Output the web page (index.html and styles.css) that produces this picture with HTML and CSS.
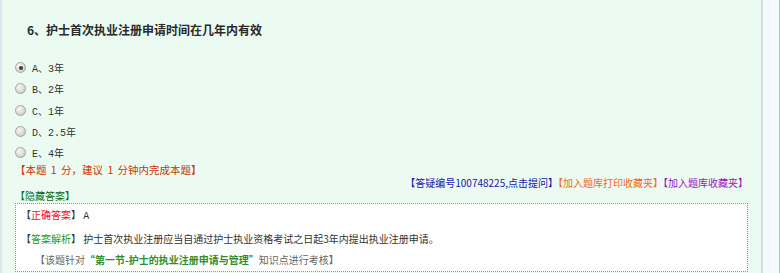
FILE: index.html
```html
<!DOCTYPE html>
<html lang="zh-CN">
<head>
<meta charset="utf-8">
<title>试题</title>
<link rel="stylesheet" href="styles.css">
</head>
<body>
<div class="page">
  <div class="main">
    <h2 class="q-title">6、护士首次执业注册申请时间在几年内有效</h2>
    <ul class="options">
      <li><span class="radio checked"></span><span class="opt">A、3年</span></li>
      <li><span class="radio"></span><span class="opt">B、2年</span></li>
      <li><span class="radio"></span><span class="opt">C、1年</span></li>
      <li><span class="radio"></span><span class="opt">D、2.5年</span></li>
      <li><span class="radio"></span><span class="opt">E、4年</span></li>
    </ul>
    <p class="score">【本题 1 分，建议 1 分钟内完成本题】</p>
    <div class="links"><a class="ask">【答疑编号100748225,点击提问】</a><a class="print">【加入题库打印收藏夹】</a><a class="fav">【加入题库收藏夹】</a></div>
    <p class="toggle">【隐藏答案】</p>
    <div class="answer">
      <p class="row">【<span class="red">正确答案</span>】 <span class="mono">A</span></p>
      <p class="row">【<span class="green">答案解析</span>】 护士首次执业注册应当自通过护士执业资格考试之日起3年内提出执业注册申请。</p>
      <p class="row point">【该题针对<b>“第一节-护士的执业注册申请与管理”</b>知识点进行考核】</p>
    </div>
    <div class="yellow"></div>
  </div>
  <div class="side"></div>
</div>
</body>
</html>
```

FILE: styles.css
```css
* { box-sizing: border-box; }
html, body { margin: 0; padding: 0; }
body {
  width: 780px;
  height: 273px;
  overflow: hidden;
  background: #f4f9fe;
  font-family: "Noto Sans CJK SC", sans-serif;
  font-size: 10px;
  color: #333;
}
p { margin: 0; }
.page { display: flex; height: 273px; }
.main {
  width: 761px;
  background: #ebfbf2;
  border-left: 2px solid #d9e8ea;
  padding: 0 13px;
}
.side {
  width: 19px;
  background: #f4f9fe;
  border-left: 2px solid #cfdde3;
  border-right: 1px solid #a8d49a;
}
.q-title {
  margin: 20px 0 0 12px;
  font-size: 12px;
  line-height: 20px;
  font-weight: bold;
  color: #2a2a2a;
}
.options { list-style: none; margin: 17px 0 0; padding: 0; }
.options li { display: flex; align-items: center; height: 21.3px; }
.radio {
  width: 11px;
  height: 11px;
  border-radius: 50%;
  border: 1px solid #a4a4a4;
  background: radial-gradient(circle at 35% 30%, #f6f6f6 0%, #dedede 50%, #bdbdbd 100%);
  display: flex;
  align-items: center;
  justify-content: center;
}
.radio.checked::after {
  content: "";
  width: 4px;
  height: 4px;
  border-radius: 50%;
  background: #3a3a3a;
}
.opt {
  margin-left: 6px;
  font-family: "Liberation Mono", "Noto Sans CJK SC", monospace;
  font-size: 10px;
  color: #333;
}
.score { line-height: 13px; color: #cc3300; font-size: 10.5px; word-spacing: 2px; }
.links { text-align: right; line-height: 13px; }
.links a { text-decoration: none; }
.ask { color: #1515b0; }
.print { color: #f06a1a; }
.fav { color: #9a12c0; }
.toggle { line-height: 13px; color: #0a6a0a; margin-bottom: 1px; }
.answer {
  background: #fff;
  border: 1px dotted #f0781e;
}
.row { line-height: 21.5px; padding-left: 5px; color: #333; }
.mono { font-family: "Liberation Mono", monospace; }
.red { color: #f01010; }
.green { color: #1a9a1a; }
.point { padding-left: 19px; color: #666; }
.point b { color: #2e8e2e; }
.yellow {
  margin: 2px 0 0 -15px;
  width: 405px;
  height: 4px;
  background: #ffff4a;
}
```
